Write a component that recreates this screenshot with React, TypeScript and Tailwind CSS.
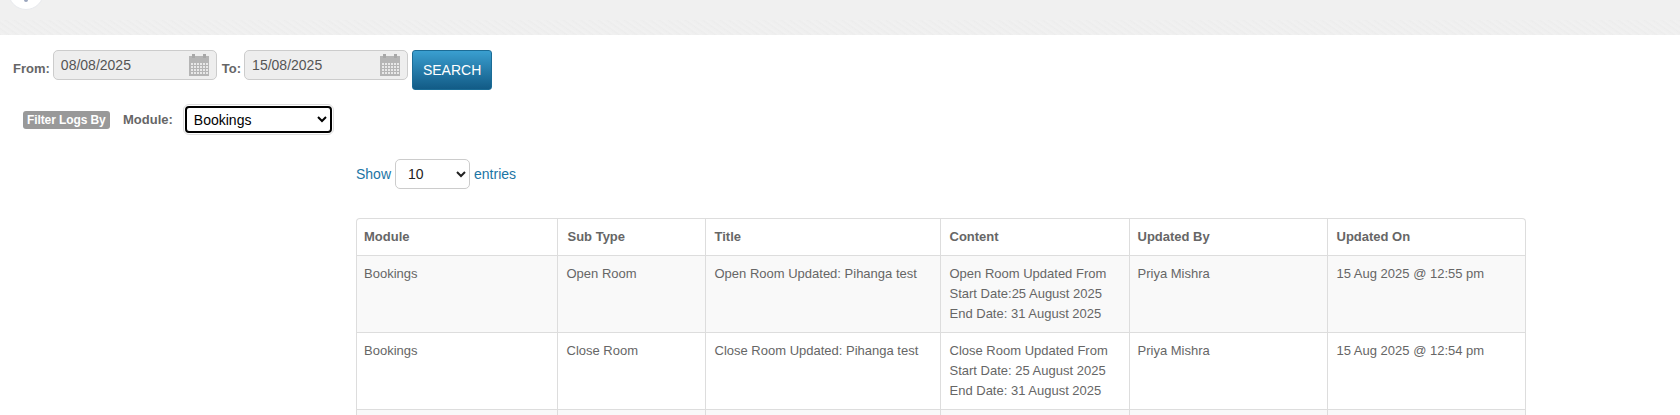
const rows = [
  {
    module: "Bookings",
    subType: "Open Room",
    title: "Open Room Updated: Pihanga test",
    content: ["Open Room Updated From", "Start Date:25 August 2025", "End Date: 31 August 2025"],
    by: "Priya Mishra",
    on: "15 Aug 2025 @ 12:55 pm",
  },
  {
    module: "Bookings",
    subType: "Close Room",
    title: "Close Room Updated: Pihanga test",
    content: ["Close Room Updated From", "Start Date: 25 August 2025", "End Date: 31 August 2025"],
    by: "Priya Mishra",
    on: "15 Aug 2025 @ 12:54 pm",
  },
];

const headers = [
  { name: "Module", pad: "pl-[7px]" },
  { name: "Sub Type", pad: "pl-[10px] border-l" },
  { name: "Title", pad: "pl-[9px] border-l" },
  { name: "Content", pad: "pl-[9px] border-l" },
  { name: "Updated By", pad: "pl-[8px] border-l" },
  { name: "Updated On", pad: "pl-[9px] border-l" },
];

const tdStyle = "py-[8px] align-top border-l border-[#dddddd]";

const CalendarIcon = () => (
  <svg width="20" height="22" viewBox="0 0 20 22" className="shrink-0">
    <rect x="0" y="2" width="20" height="20" fill="#b5b5b5" />
    <rect x="3" y="0" width="3" height="4" fill="#a8a8a8" />
    <rect x="14" y="0" width="3" height="4" fill="#a8a8a8" />
    {[9, 12, 15, 18].map((y) =>
      [2, 5, 8, 11, 14, 17].map((x) => (
        <rect key={`${x}-${y}`} x={x} y={y} width="2" height="2" fill="#e8e8e8" />
      ))
    )}
  </svg>
);

const DateInput = ({ value }: { value: string }) => (
  <div className="flex items-center justify-between w-[164px] h-[30px] pl-[7px] pr-[7px] rounded-[5px] border border-[#cccccc] bg-[#eeeeee] text-[14px] text-[#555555]">
    <span>{value}</span>
    <CalendarIcon />
  </div>
);

const App = () => {
  return (
    <div className="relative h-[415px] overflow-hidden bg-white font-['Liberation_Sans',Arial,sans-serif] text-[13px] text-[#666666]">
      <div className="absolute left-[8px] top-[-26px] w-[36px] h-[36px] rounded-full bg-white border border-[#e8eaee]">
        <div className="absolute left-[15px] bottom-[7px] w-[4px] h-[3px] rounded-b-full bg-[#9aa5bd]" />
      </div>
      <div className="h-[20px] bg-[#f0f0f0]" />
      <div className="h-[15px] bg-[repeating-linear-gradient(35deg,#ececec_0px,#f1f1f1_2px,#eeeeee_5px)]" />

      <div className="flex items-start pt-[15px] pl-[13px]">
        <label className="mt-[9px] mr-[3px] font-bold text-[13px]">From:</label>
        <DateInput value="08/08/2025" />
        <label className="mt-[9px] ml-[5px] mr-[3px] font-bold text-[13px]">To:</label>
        <DateInput value="15/08/2025" />
        <button className="ml-[4px] w-[80px] h-[40px] rounded-[3px] border border-[#1b6c96] bg-gradient-to-b from-[#3a9fd0] to-[#125b86] text-white text-[14px]">
          SEARCH
        </button>
      </div>

      <div className="flex items-center pl-[23px] mt-[16px]">
        <span className="px-[4px] w-[87px] whitespace-nowrap overflow-hidden h-[18px] leading-[18px] rounded-[3px] bg-[#999999] text-white text-[12px] font-bold tracking-[-0.1px]">
          Filter Logs By
        </span>
        <label className="ml-[13px] font-bold text-[13px]">Module:</label>
        <select
          defaultValue="Bookings"
          className="ml-[12px] w-[147px] h-[27px] pl-[3px] rounded-[4px] border-2 border-black bg-white text-[14px] text-black outline outline-1 outline-offset-[1px] outline-[#dddddd]"
        >
          <option>Bookings</option>
        </select>
      </div>

      <div className="ml-[356px] w-[1170px] mt-[26px]">
        <div className="flex items-center h-[30px] text-[14px] text-[#1b75a5]">
          <span>Show</span>
          <select
            defaultValue="10"
            className="mx-[4px] w-[75px] h-[30px] pl-[8px] rounded-[5px] border border-[#cccccc] bg-white text-[14px] text-[#222222]"
          >
            <option>10</option>
          </select>
          <span>entries</span>
        </div>

        <div className="mt-[29px] rounded-t-[4px] border border-[#dddddd] border-b-0">
          <table className="w-full table-fixed border-collapse">
            <colgroup>
              <col className="w-[200px]" />
              <col className="w-[148px]" />
              <col className="w-[235px]" />
              <col className="w-[189px]" />
              <col className="w-[198px]" />
              <col />
            </colgroup>
            <thead>
              <tr>
                {headers.map((h) => (
                  <th
                    key={h.name}
                    className={`h-[36px] ${h.pad} text-left font-bold border-b border-[#dddddd]`}
                  >
                    {h.name}
                  </th>
                ))}
              </tr>
            </thead>
            <tbody className="leading-[20px]">
              {rows.map((row, i) => (
                <tr key={row.title} className={`border-b border-[#dddddd] ${i % 2 === 0 ? "bg-[#f9f9f9]" : "bg-white"}`}>
                  <td className="h-[77px] pl-[7px] py-[8px] align-top">{row.module}</td>
                  <td className={`pl-[9px] ${tdStyle}`}>{row.subType}</td>
                  <td className={`pl-[9px] ${tdStyle}`}>{row.title}</td>
                  <td className={`pl-[9px] ${tdStyle}`}>
                    {row.content.map((line) => (
                      <div key={line}>{line}</div>
                    ))}
                  </td>
                  <td className={`pl-[8px] ${tdStyle}`}>{row.by}</td>
                  <td className={`pl-[9px] ${tdStyle}`}>{row.on}</td>
                </tr>
              ))}
              <tr className="bg-[#f9f9f9]">
                {headers.map((h, i) => (
                  <td key={h.name} className={`h-[77px] ${i > 0 ? "border-l border-[#dddddd]" : ""}`} />
                ))}
              </tr>
            </tbody>
          </table>
        </div>
      </div>
    </div>
  );
};

export default App;
